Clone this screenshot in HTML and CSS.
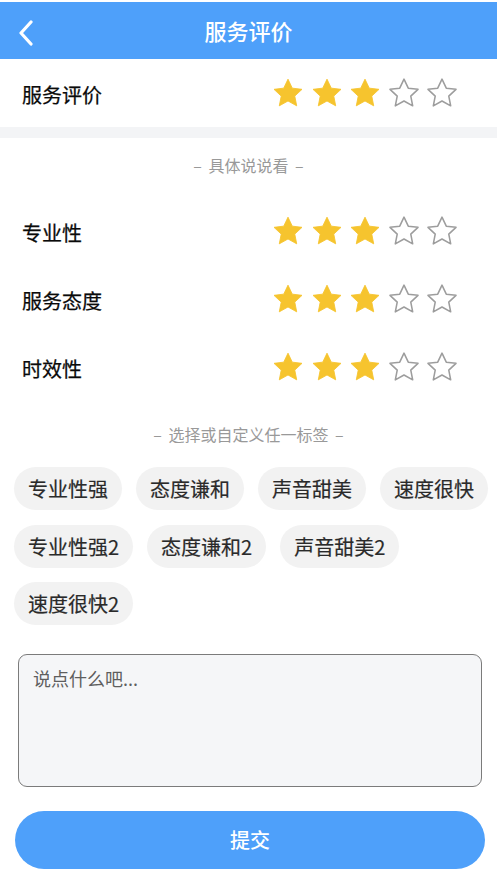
FILE: index.html
```html
<!DOCTYPE html>
<html lang="zh-CN">
<head>
<meta charset="utf-8">
<title>服务评价</title>
<link rel="stylesheet" href="styles.css">
</head>
<body>
<svg width="0" height="0" class="defs">
  <defs>
    <path id="star" d="M12 2.5l2.9 6.1 6.6.8-4.9 4.6 1.3 6.6L12 17.3l-5.9 3.3 1.3-6.6-4.9-4.6 6.6-.8z"/>
  </defs>
</svg>
<header class="topbar">
  <svg class="back" width="16" height="26" viewBox="0 0 16 26"><path d="M13 2L3 13l10 11" fill="none" stroke="#fff" stroke-width="3.2" stroke-linecap="round" stroke-linejoin="round"/></svg>
  <h1 class="title">服务评价</h1>
</header>

<section class="row main-row">
  <span class="label">服务评价</span>
  <div class="stars">
    <svg class="star on" viewBox="2.5 2.5 19 18.1"><use href="#star"/></svg>
    <svg class="star on" viewBox="2.5 2.5 19 18.1"><use href="#star"/></svg>
    <svg class="star on" viewBox="2.5 2.5 19 18.1"><use href="#star"/></svg>
    <svg class="star off" viewBox="2.5 2.5 19 18.1"><use href="#star"/></svg>
    <svg class="star off" viewBox="2.5 2.5 19 18.1"><use href="#star"/></svg>
  </div>
</section>

<div class="band"></div>

<p class="subtitle first">– 具体说说看 –</p>

<section class="row">
  <span class="label">专业性</span>
  <div class="stars">
    <svg class="star on" viewBox="2.5 2.5 19 18.1"><use href="#star"/></svg>
    <svg class="star on" viewBox="2.5 2.5 19 18.1"><use href="#star"/></svg>
    <svg class="star on" viewBox="2.5 2.5 19 18.1"><use href="#star"/></svg>
    <svg class="star off" viewBox="2.5 2.5 19 18.1"><use href="#star"/></svg>
    <svg class="star off" viewBox="2.5 2.5 19 18.1"><use href="#star"/></svg>
  </div>
</section>
<section class="row">
  <span class="label">服务态度</span>
  <div class="stars">
    <svg class="star on" viewBox="2.5 2.5 19 18.1"><use href="#star"/></svg>
    <svg class="star on" viewBox="2.5 2.5 19 18.1"><use href="#star"/></svg>
    <svg class="star on" viewBox="2.5 2.5 19 18.1"><use href="#star"/></svg>
    <svg class="star off" viewBox="2.5 2.5 19 18.1"><use href="#star"/></svg>
    <svg class="star off" viewBox="2.5 2.5 19 18.1"><use href="#star"/></svg>
  </div>
</section>
<section class="row">
  <span class="label">时效性</span>
  <div class="stars">
    <svg class="star on" viewBox="2.5 2.5 19 18.1"><use href="#star"/></svg>
    <svg class="star on" viewBox="2.5 2.5 19 18.1"><use href="#star"/></svg>
    <svg class="star on" viewBox="2.5 2.5 19 18.1"><use href="#star"/></svg>
    <svg class="star off" viewBox="2.5 2.5 19 18.1"><use href="#star"/></svg>
    <svg class="star off" viewBox="2.5 2.5 19 18.1"><use href="#star"/></svg>
  </div>
</section>

<p class="subtitle second">– 选择或自定义任一标签 –</p>

<div class="tags">
  <span class="tag">专业性强</span>
  <span class="tag">态度谦和</span>
  <span class="tag">声音甜美</span>
  <span class="tag">速度很快</span>
  <span class="tag">专业性强2</span>
  <span class="tag">态度谦和2</span>
  <span class="tag">声音甜美2</span>
  <span class="tag">速度很快2</span>
</div>

<textarea class="comment" placeholder="说点什么吧..."></textarea>

<button class="submit" type="button">提交</button>
</body>
</html>
```

FILE: styles.css
```css
* { box-sizing: border-box; }

html, body {
  margin: 0;
  padding: 0;
  background: #fff;
}

body {
  width: 497px;
  font-family: "Noto Sans CJK SC", "Noto Sans", sans-serif;
  color: #111;
}

.defs {
  position: absolute;
  width: 0;
  height: 0;
}

.topbar {
  height: 57px;
  margin-top: 2px;
  background: #4ea0fa;
  display: flex;
  align-items: center;
  justify-content: center;
  position: relative;
}

.back {
  position: absolute;
  left: 18px;
  top: 18px;
}

.title {
  margin: 0;
  font-size: 22px;
  font-weight: 500;
  color: #fff;
  line-height: 1;
  margin-top: -2px;
}

.row {
  display: flex;
  align-items: center;
  justify-content: space-between;
  height: 68px;
  padding: 0 41px 0 22px;
}

.label {
  font-size: 20px;
  font-weight: 400;
  line-height: 1;
  color: #0a0a0a;
  margin-top: 4px;
  -webkit-text-stroke: 0.25px #0a0a0a;
}

.stars {
  display: flex;
  gap: 10.5px;
  margin-top: -2px;
}

.star {
  width: 28px;
  height: 27px;
  overflow: visible;
}

.star.on {
  fill: #f6c42e;
  stroke: #f6c42e;
  stroke-width: 0.6;
  stroke-linejoin: round;
}

.star.off {
  fill: none;
  stroke: #9d9d9d;
  stroke-width: 1.05;
  stroke-linejoin: round;
}

.band {
  height: 11px;
  background: #f3f4f6;
}

.subtitle {
  margin: 0;
  text-align: center;
  font-size: 16px;
  line-height: 22px;
  color: #999;
  word-spacing: 3px;
}

.subtitle.first {
  margin-top: 16px;
  margin-bottom: 21px;
}

.subtitle.second {
  margin-top: 22px;
  margin-bottom: 22px;
}

.tags {
  display: flex;
  flex-wrap: wrap;
  column-gap: 14px;
  row-gap: 14.5px;
  padding: 0 6px 0 14px;
}

.tag {
  height: 43px;
  padding: 0 14px;
  border-radius: 22px;
  background: #f2f2f2;
  font-size: 20px;
  font-weight: 400;
  line-height: 43px;
  color: #2a2a2a;
  -webkit-text-stroke: 0.2px #2a2a2a;
}

.comment {
  display: block;
  width: 464px;
  height: 133px;
  margin: 29px 0 0 18px;
  padding: 10px 14px;
  border: 1.5px solid #7b7b7b;
  border-radius: 9px;
  background: #f5f6f8;
  font-family: "Noto Sans CJK SC", "Noto Sans", sans-serif;
  font-size: 18px;
  line-height: 26px;
  color: #333;
  resize: none;
  outline: none;
}

.comment::placeholder {
  color: #5e5e5e;
}

.submit {
  display: flex;
  align-items: center;
  justify-content: center;
  width: 470px;
  height: 58px;
  margin: 24px 0 0 15px;
  border: 0;
  border-radius: 29px;
  background: #4ea0fa;
  color: #fff;
  font-family: "Noto Sans CJK SC", "Noto Sans", sans-serif;
  font-size: 20px;
  font-weight: 500;
  line-height: 1;
  padding: 0;
}
```
